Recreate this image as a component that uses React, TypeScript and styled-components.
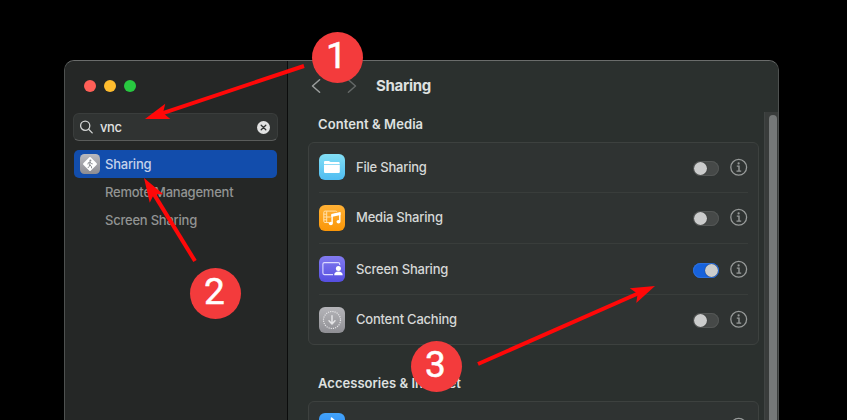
import React from "react";
import styled, { createGlobalStyle, css } from "styled-components";

const GlobalStyle = createGlobalStyle`
  html, body { margin: 0; padding: 0; background: #000; overflow: hidden; }
  * { box-sizing: border-box; }
`;

const Stage = styled.main`
  position: relative;
  width: 847px;
  height: 420px;
  overflow: hidden;
  padding: 60px 68px 0 64px;
  background: #000;
  font-family: Inter, "Liberation Sans", sans-serif;
  color: #dfe1e0;
`;

const Window = styled.div`
  display: flex;
  width: 715px;
  height: 400px;
  border: 1px solid #4e5150;
  border-top-color: #6a6c6b;
  border-radius: 10px;
  overflow: hidden;
  background: #2c302f;
`;

const Sidebar = styled.aside`
  width: 223px;
  flex: none;
  padding: 19px 9px 0 8px;
  background: #252726;
  border-right: 1px solid #0b0c0c;
`;

const TrafficLights = styled.div`
  display: flex;
  gap: 8px;
  padding-left: 11px;
`;

const Light = styled.span<{ $color: string }>`
  width: 12px;
  height: 12px;
  border-radius: 50%;
  background: ${(p) => p.$color};
`;

const SearchField = styled.div`
  display: flex;
  align-items: center;
  width: 205px;
  height: 28px;
  margin-top: 21px;
  padding: 0 7px 0 6px;
  border: 1px solid #3a3d3c;
  border-bottom-color: #5a5c5b;
  border-radius: 6px;
  background: #303332;
`;

const Query = styled.span`
  flex: 1;
  margin-left: 7px;
  font-size: 13px;
  line-height: 16px;
  font-weight: 500;
  letter-spacing: -0.4px;
  color: #e0e1e1;
`;

const Results = styled.div`
  margin: 9px 0 0 1px;
`;

const Result = styled.div<{ $selected?: boolean }>`
  display: flex;
  align-items: center;
  width: 203px;
  height: 28px;
  padding-left: ${(p) => (p.$selected ? 6 : 31)}px;
  border-radius: 5px;
  background: ${(p) => (p.$selected ? "#124dac" : "transparent")};
  color: ${(p) => (p.$selected ? "#c5d2ea" : "#929493")};
  font-size: 13px;
  font-weight: 500;
  letter-spacing: -0.23px;
  white-space: nowrap;
  svg { margin-right: 5px; }
`;

const Content = styled.section`
  display: flex;
  flex: 1;
  flex-direction: column;
  background: #2b302e;
`;

const Toolbar = styled.header`
  display: flex;
  align-items: center;
  height: 51px;
  padding: 0 0 2px 23px;
`;

const Title = styled.h1`
  margin: 0 0 0 19px;
  font-size: 15px;
  line-height: 20px;
  font-weight: 700;
  letter-spacing: -0.3px;
`;

const Body = styled.div`
  display: flex;
  flex: 1;
`;

const Settings = styled.div`
  width: 476px;
  padding: 4px 5px 0 20px;
`;

const Heading = styled.h2<{ $next?: boolean }>`
  margin: ${(p) => (p.$next ? "30px" : "0")} 0 9px 10px;
  font-size: 13px;
  line-height: 17px;
  font-weight: 600;
  letter-spacing: ${(p) => (p.$next ? "0.03px" : "0.08px")};
`;

const Panel = styled.div`
  width: 451px;
  padding: 0 10px;
  border: 1px solid #3d413f;
  border-radius: 6px;
  background: #2f3332;
`;

const Row = styled.div<{ $height: number; $shift: number; $top: number }>`
  display: flex;
  align-items: flex-start;
  height: ${(p) => p.$height}px;
  padding-top: ${(p) => p.$top}px;
  & + & { border-top: 1px solid #393d3b; }
  > span { margin-top: ${(p) => p.$shift}px; }
`;

const Label = styled.span`
  flex: 1;
  padding: 5px 0 0 11px;
  font-size: 13px;
  line-height: 16px;
  font-weight: 500;
  letter-spacing: -0.22px;
  color: #d6d8d7;
`;

const Toggle = styled.div<{ $on?: boolean }>`
  display: flex;
  align-items: center;
  width: 26px;
  height: 15px;
  margin: 7px 11px 0 0;
  border-radius: 8px;
  background: #464948;
  box-shadow: inset 0 0 0 1px #535655;
  ${(p) => p.$on && css`
    justify-content: flex-end;
    background: #1762dc;
    box-shadow: inset 0 0 0 1px #2b6fdc;
  `}
  &::before {
    content: "";
    width: 13px;
    height: 13px;
    margin: 0 1px;
    border-radius: 50%;
    background: #cbcccc;
    box-shadow: 0 0 1px #1a1c1b;
  }
`;

const InfoSlot = styled.span`
  height: 18px;
  padding-top: 4px;
`;

const ToggleSlot = styled.span``;

const ScrollTrack = styled.div`
  width: 14px;
  padding: 3px 2px 0 4px;
  border-left: 1px solid #404443;
  background: #393c3b;
`;

const Thumb = styled.div`
  width: 8px;
  height: 340px;
  border-radius: 4px;
  background: #757878;
`;

const Annotation = styled.svg`
  position: absolute;
  inset: 0;
`;

const Marker = styled.div<{ $x: number; $y: number }>`
  position: absolute;
  left: ${(p) => p.$x}px;
  top: ${(p) => p.$y}px;
  display: flex;
  align-items: center;
  justify-content: center;
  width: 51px;
  height: 51px;
  padding: 0 2px 3px 0;
  border-radius: 50%;
  background: #f33b3c;
  color: #fff;
  font: 400 37px/40px Roboto, "Liberation Sans", sans-serif;
  -webkit-text-stroke: 0.5px #fff;
`;

const ChevronGap = styled.span`
  width: 26px;
`;

const SearchIcon = () => (
  <svg width="13" height="14" viewBox="0 0 13 14" fill="none" stroke="#d2d4d3" strokeWidth="1.3" strokeLinecap="round">
    <circle cx="5.2" cy="5.7" r="4.6" />
    <path d="m8.6 9.2 3.6 3.7" />
  </svg>
);

const ClearIcon = () => (
  <svg width="13" height="13" viewBox="0 0 13 13">
    <circle cx="6.5" cy="6.5" r="6.5" fill="#e1e2e2" />
    <path d="m4.2 4.2 4.6 4.6m0-4.6L4.2 8.8" stroke="#303332" strokeWidth="1.3" strokeLinecap="round" />
  </svg>
);

const Chevron = ({ forward }: { forward?: boolean }) => (
  <svg width="10" height="16" viewBox="0 0 10 16" fill="none" stroke={forward ? "#646867" : "#9a9d9c"} strokeWidth="1.5" strokeLinecap="round" strokeLinejoin="round">
    <path d={forward ? "M1.4 1.7 8.5 8l-7.1 6.3" : "M8.6 1.7 1.5 8l7.1 6.3"} />
  </svg>
);

const SharingIcon = () => (
  <svg width="20" height="20" viewBox="0 0 20 20">
    <defs>
      <linearGradient id="sharing" x2="0" y2="1"><stop stopColor="#b9b9be" /><stop offset="1" stopColor="#8d8d93" /></linearGradient>
    </defs>
    <rect width="20" height="20" rx="4.5" fill="url(#sharing)" />
    <rect x="4.8" y="4.8" width="10.4" height="10.4" rx="1" fill="#fff" transform="rotate(45 10 10)" />
    <circle cx="10.4" cy="6.4" r="1" fill="#8f9196" />
    <path d="M10 7.9 9.7 10.7l1.5 1.4.4 1.8M9.7 10.8l-.5 1.6-1.1 1.3M8 10.1l.3-1.4L10 8l1.2 1.5 1.1.3" fill="none" stroke="#8f9196" strokeWidth="1" strokeLinecap="round" strokeLinejoin="round" />
  </svg>
);

const InfoIcon = () => (
  <svg width="18" height="18" viewBox="0 0 18 18" fill="none" stroke="#979a99">
    <circle cx="8.7" cy="9.3" r="7.9" strokeWidth="1.3" />
    <circle cx="8.6" cy="5.4" r="1.1" fill="#979a99" stroke="none" />
    <path d="M6.8 8.1h2.2v5M6.5 13.1h4.7" strokeWidth="1.4" />
  </svg>
);

type Kind = "file" | "media" | "screen" | "cache" | "bluetooth";

const tints: Record<Kind, [string, string]> = {
  file: ["#83dff5", "#4ebcf1"],
  media: ["#ffb135", "#fb9607"],
  screen: ["#827bf0", "#554ee0"],
  cache: ["#b5b5b9", "#8f8f94"],
  bluetooth: ["#43a3fb", "#2585f2"],
};

const AppIcon = ({ kind }: { kind: Kind }) => (
  <svg width="26" height="26" viewBox="0 0 26 26" fill="none">
    <defs>
      <linearGradient id={kind} x2="0" y2="1"><stop stopColor={tints[kind][0]} /><stop offset="1" stopColor={tints[kind][1]} /></linearGradient>
    </defs>
    <rect width="26" height="26" rx="6" fill={`url(#${kind})`} />
    {kind === "file" && (
      <g fill="#fff">
        <path d="M5 10V8.2C5 7.3 5.5 7 6.3 7h3.5c.7 0 1.1.9 1.8.9h7.7c1 0 1.4.5 1.4 1.3v.8Z" />
        <path d="M5 10.8h15.8v6.8c0 1-.5 1.5-1.5 1.5H6.5c-1 0-1.5-.5-1.5-1.5Z" />
      </g>
    )}
    {kind === "media" && (
      <g>
        <path d="M10 17.5H6c-.8 0-1.2-.4-1.2-1.2V7.3c0-.8.4-1.2 1.2-1.2h10.5c.8 0 1.2.3 1.2.8M7.7 6.3v11M4.8 9.2h2.9m-2.9 2.8h2.9m-2.9 2.8h2.9m0-2.8h4" stroke="#ffe0ab" strokeWidth="1" />
        <path d="M13.1 18V10l7.7-1.7v8" stroke="#fff" strokeWidth="1.4" />
        <path d="M12.4 9.1 21.5 7v2.9l-9.1 2Z" fill="#fff" />
        <ellipse cx="11.8" cy="18.5" rx="2" ry="1.7" fill="#fff" />
        <ellipse cx="19.5" cy="16.8" rx="2" ry="1.7" fill="#fff" />
      </g>
    )}
    {kind === "screen" && (
      <g>
        <path d="M14 18.6H5.4c-.9 0-1.5-.6-1.5-1.5v-9c0-.9.6-1.5 1.5-1.5h13.8c.9 0 1.5.6 1.5 1.5v1" stroke="#dcdaff" strokeWidth="1.1" />
        <circle cx="19.4" cy="12.5" r="2.5" fill="#fff" />
        <path d="M15.2 19.2c0-2.4 1.6-3.7 4.2-3.7s4.3 1.3 4.3 3.7Z" fill="#fff" />
      </g>
    )}
    {kind === "cache" && (
      <g stroke="#e4e4e6">
        <circle cx="13" cy="13" r="8.5" strokeWidth="1.2" strokeDasharray="1.2 1.03" />
        <path d="M13 8.8v8m-3-3 3 3.1 3-3.1" strokeWidth="1.5" strokeLinecap="round" strokeLinejoin="round" />
      </g>
    )}
    {kind === "bluetooth" && (
      <path d="m8 9 9 8-4.5 4V5l4.5 4-9 8" stroke="#fff" strokeWidth="1.5" strokeLinejoin="round" />
    )}
  </svg>
);

const services: { kind: Kind; name: string; on?: boolean; height: number; top: number; shift: number }[] = [
  { kind: "file", name: "File Sharing", height: 49, top: 11, shift: 0 },
  { kind: "media", name: "Media Sharing", height: 51, top: 12, shift: -1 },
  { kind: "screen", name: "Screen Sharing", on: true, height: 51, top: 12, shift: 0 },
  { kind: "cache", name: "Content Caching", height: 50, top: 12, shift: -1 },
];

const Arrow = ({ from, to }: { from: [number, number]; to: [number, number] }) => {
  const angle = (Math.atan2(to[1] - from[1], to[0] - from[0]) * 180) / Math.PI;
  const length = Math.hypot(to[0] - from[0], to[1] - from[1]);
  return (
    <g transform={`translate(${to[0]} ${to[1]}) rotate(${angle})`} fill="#ff0808">
      <path d={`M${-length}-2H-18V2H${-length}Z`} />
      <path d="M0 0-24-8-19 0-24 8Z" />
    </g>
  );
};

export default function App() {
  return (
    <Stage>
      <GlobalStyle />
      <Window>
        <Sidebar>
          <TrafficLights>
            <Light $color="#ff5f57" />
            <Light $color="#febc2e" />
            <Light $color="#28c840" />
          </TrafficLights>
          <SearchField>
            <SearchIcon />
            <Query>vnc</Query>
            <ClearIcon />
          </SearchField>
          <Results>
            <Result $selected><SharingIcon />Sharing</Result>
            <Result>Remote Management</Result>
            <Result>Screen Sharing</Result>
          </Results>
        </Sidebar>
        <Content>
          <Toolbar>
            <Chevron />
            <ChevronGap />
            <Chevron forward />
            <Title>Sharing</Title>
          </Toolbar>
          <Body>
            <Settings>
              <Heading>Content &amp; Media</Heading>
              <Panel>
                {services.map((s) => (
                  <Row key={s.kind} $height={s.height} $shift={s.shift} $top={s.top}>
                    <AppIcon kind={s.kind} />
                    <Label>{s.name}</Label>
                    <ToggleSlot><Toggle $on={s.on} /></ToggleSlot>
                    <InfoSlot><InfoIcon /></InfoSlot>
                  </Row>
                ))}
              </Panel>
              <Heading $next>Accessories &amp; Internet</Heading>
              <Panel>
                <Row $height={51} $shift={0} $top={11}>
                  <AppIcon kind="bluetooth" />
                  <Label />
                  <ToggleSlot><Toggle /></ToggleSlot>
                  <InfoSlot><InfoIcon /></InfoSlot>
                </Row>
              </Panel>
            </Settings>
            <ScrollTrack><Thumb /></ScrollTrack>
          </Body>
        </Content>
      </Window>
      <Annotation width="847" height="420" viewBox="0 0 847 420">
        <Arrow from={[304, 66]} to={[145, 119]} />
        <Arrow from={[195, 261]} to={[144, 178]} />
        <Arrow from={[478, 364]} to={[655, 286]} />
      </Annotation>
      <Marker $x={312} $y={32}>1</Marker>
      <Marker $x={190} $y={268}>2</Marker>
      <Marker $x={411} $y={341}>3</Marker>
    </Stage>
  );
}
